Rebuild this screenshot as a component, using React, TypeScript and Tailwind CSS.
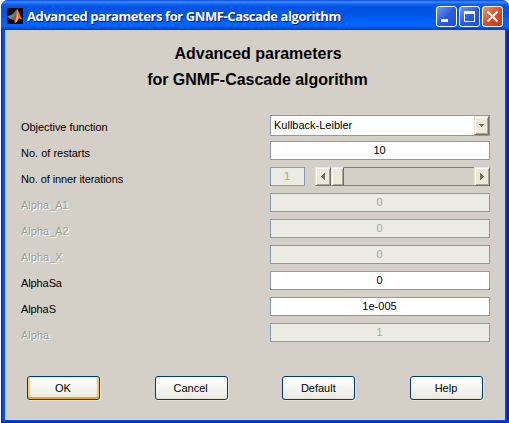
import React from "react";

type RowProps = { label: string; disabled?: boolean; labelClass?: string; children: React.ReactNode };

function Row({ label, disabled, labelClass = "", children }: RowProps) {
  return (
    <div className="flex h-[26px] items-start">
      <div
        className={`w-[249px] shrink-0 whitespace-nowrap pt-1 leading-4 ${
          disabled ? "text-[#a19d8f] [text-shadow:1px_1px_0_#ffffff]" : "text-black"
        } ${labelClass}`}
      >
        {label}
      </div>
      {children}
    </div>
  );
}

function Field({ value, disabled, className = "w-[220px]" }: { value: string; disabled?: boolean; className?: string }) {
  return (
    <div
      className={`flex h-[19px] items-center justify-center border border-[#7f9db9] pb-px pr-px leading-4 ${
        disabled ? "bg-[#ebebe4] text-[#aca899]" : "bg-white text-black"
      } ${className}`}
    >
      {value}
    </div>
  );
}

const bevel =
  "flex shrink-0 items-center justify-center border border-t-[#ece9d8] border-l-[#ece9d8] border-r-[#716f64] border-b-[#716f64] bg-[#ece9d8] shadow-[inset_1px_1px_0_#ffffff,inset_-1px_-1px_0_#aca899]";

function Slider() {
  return (
    <div className="ml-[10px] flex h-[19px] w-[175px] border-y border-[#808080] bg-[#d4d0c8]">
      <div className={`${bevel} -my-px h-[19px] w-4`}>
        <svg width="4" height="7" viewBox="0 0 4 7" shapeRendering="crispEdges">
          <path d="M3 0h1v7H3V6H2V5H1V4H0V3h1V2h1V1h1z" fill="#716f64" />
        </svg>
      </div>
      <div className={`${bevel} -my-px h-[19px] w-[13px]`} />
      <div className="flex-1" />
      <div className={`${bevel} -my-px h-[19px] w-4`}>
        <svg width="4" height="7" viewBox="0 0 4 7" shapeRendering="crispEdges">
          <path d="M0 0h1v1h1v1h1v1h1v1H3v1H2v1H1v1H0z" fill="#716f64" />
        </svg>
      </div>
    </div>
  );
}

function PushButton({ label, focused }: { label: string; focused?: boolean }) {
  return (
    <div
      className={`flex h-6 w-[73px] items-center justify-center rounded-[3px] border border-[#003c74] bg-linear-to-b from-white via-[#f5f5f1] to-[#ebeae4] pb-px pr-px leading-4 ${
        focused
          ? "shadow-[inset_0_1px_0_#ffe7b3,inset_0_-2px_0_#eda31c,inset_2px_0_0_#fbcb6c,inset_-2px_0_0_#fbc761,1px_1px_0_#e6e3db]"
          : "shadow-[inset_0_-1px_0_#e2dfd6,1px_1px_0_#e6e3db]"
      }`}
    >
      {label}
    </div>
  );
}

function CaptionButton({ kind }: { kind: "min" | "max" | "close" }) {
  return (
    <div
      className={`flex h-[21px] w-[21px] items-center justify-center rounded-[3px] border border-white ${
        kind === "close"
          ? "bg-linear-to-br from-[#ed9273] via-[#df4b25] to-[#c63a12]"
          : "bg-linear-to-br from-[#7498f0] via-[#2c5cdc] to-[#1b4ed8]"
      }`}
    >
      <svg width="19" height="19" viewBox="0 0 19 19">
        {kind === "min" && <path d="M4 12h7v3H4z" fill="#fff" />}
        {kind === "max" && <path d="M4 4h11v11H4zM5 7v7h9V7z" fill="#fff" fillRule="evenodd" />}
        {kind === "close" && <path d="M4.5 4.5l10 10M14.5 4.5l-10 10" stroke="#fff" strokeWidth="2.2" />}
      </svg>
    </div>
  );
}

function MatlabIcon() {
  return (
    <svg width="16" height="16" viewBox="0 0 16 16" className="shrink-0">
      <path d="M0 0h16v16H0z" fill="#000" />
      <path d="M0.5 8.5L5 6.5l2 2.5-3 2.5z" fill="#4b9ba8" />
      <path d="M5 6.5C7.500 5.500 8 2 10 1L9 8l-3.500 4L4 10z" fill="#4a8796" />
      <path d="M10 1C9 4 8 8.500 4.500 11.500 6.500 11 7 13 8 15c2.500-1 3-4 5-5z" fill="#c8431c" />
      <path d="M10 1c2 2 3 7 5.500 11-2.500-2-3.500-2-5.500 0z" fill="#e87a35" />
      <path d="M10 1l-.5 8L8 15c2-1 2.800-3 3.200-5z" fill="#f4b45a" />
    </svg>
  );
}

export default function App() {
  return (
    <div className="h-[423px] w-[509px] overflow-hidden bg-white pl-px font-['Liberation_Sans',Arial,sans-serif] text-[11px]">
      <div className="flex h-[423px] w-[508px] flex-col rounded-t-[7px] bg-[#0831d9]">
        <div className="flex h-[30px] shrink-0 items-center rounded-t-[7px] bg-[linear-gradient(to_bottom,#0848d8_0px,#3c8cff_2px,#1264f0_4px,#0054e3_7px,#0054e3_14px,#0062fa_22px,#0066ff_26px,#0050dc_28px,#003fc2_30px)] pl-[6px] pr-[6px] pt-[2px]">
          <MatlabIcon />
          <div className="ml-1 flex-1 whitespace-nowrap font-['Open_Sans',sans-serif] text-[13px] font-bold leading-5 tracking-[-0.41px] text-white [text-shadow:1px_1px_0_#0a1883]">
            Advanced parameters for GNMF-Cascade algorithm
          </div>
          <div className="flex gap-[2px]">
            <CaptionButton kind="min" />
            <CaptionButton kind="max" />
            <CaptionButton kind="close" />
          </div>
        </div>
        <div className="flex flex-1 bg-[linear-gradient(to_right,#0020c0_0px,#0a4cf0_2px,#0055e5_4px,#0048e8_504px,#0042e8_505px,#001ca8_507px)]">
          <div className="mx-1 flex flex-1 flex-col bg-[#d4d0c8]">
            <div className="pt-[11px] text-center text-[16px] font-bold leading-[26px] text-black">
              <div className="pl-[6px]">Advanced parameters</div>
              <div className="pl-[5px] tracking-[-0.03px]">for GNMF-Cascade algorithm</div>
            </div>
            <div className="mt-[22px] pl-4">
              <Row label="Objective function" labelClass="tracking-[-0.05px]">
                <div className="flex h-[21px] w-[220px] border border-[#7f9db9] bg-white">
                  <div className="flex-1 pl-[3px] pt-px leading-4">Kullback-Leibler</div>
                  <div className={`${bevel} h-[19px] w-[15px]`}>
                    <svg width="5" height="3" viewBox="0 0 5 3" shapeRendering="crispEdges">
                      <path d="M0 0h5v1H4v1H3v1H2V2H1V1H0z" fill="#716f64" />
                    </svg>
                  </div>
                </div>
              </Row>
              <Row label="No. of restarts"><Field value="10" /></Row>
              <Row label="No. of inner iterations" labelClass="tracking-[-0.11px]">
                <Field value="1" disabled className="w-[35px]" />
                <Slider />
              </Row>
              <Row label="Alpha_A1" disabled><Field value="0" disabled /></Row>
              <Row label="Alpha_A2" disabled><Field value="0" disabled /></Row>
              <Row label="Alpha_X" disabled><Field value="0" disabled /></Row>
              <Row label="AlphaSa" labelClass="tracking-[-0.1px]"><Field value="0" /></Row>
              <Row label="AlphaS" labelClass="tracking-[-0.1px]"><Field value="1e-005" /></Row>
              <Row label="Alpha" disabled><Field value="1" disabled /></Row>
            </div>
            <div className="mt-[27px] flex justify-between px-[22px]">
              <PushButton label="OK" focused />
              <PushButton label="Cancel" />
              <PushButton label="Default" />
              <PushButton label="Help" />
            </div>
          </div>
        </div>
        <div className="h-[3px] shrink-0 bg-[linear-gradient(to_bottom,#0048f0_0px,#0040e0_1px,#0018a8_3px)]" />
      </div>
    </div>
  );
}
